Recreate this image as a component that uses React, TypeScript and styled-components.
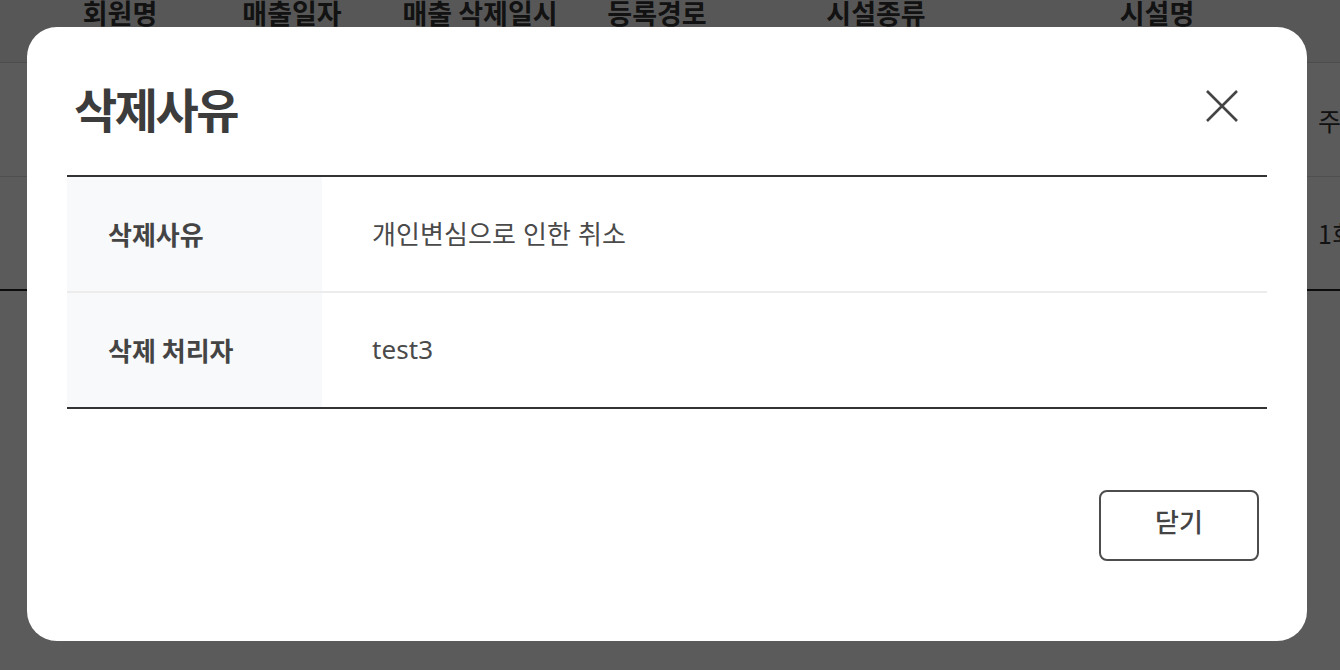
import React from "react";
import styled, { createGlobalStyle } from "styled-components";

const Global = createGlobalStyle`
  html, body { margin: 0; padding: 0; background: #ffffff; overflow: hidden; }
  body { font-family: "Noto Sans CJK KR", "Noto Sans", sans-serif; width: 1340px; height: 670px; }
  * { box-sizing: border-box; }
`;

const Page = styled.div`
  width: 1340px;
  height: 670px;
  overflow: hidden;
  background: #ffffff;
`;

const BgTable = styled.div`
  margin-top: -40px;
  display: grid;
  grid-template-columns: 40px 160px 184px 192px 162px 276px 286px 140px;
`;

const HeadCell = styled.div`
  height: 103px;
  display: flex;
  align-items: center;
  justify-content: center;
  background: #f4f4f4;
  border-bottom: 1px solid #d8d8d8;
  font-size: 27px;
  font-weight: 700;
  color: #333;
  white-space: nowrap;
  padding-top: 2px;
`;

const BodyCell = styled.div<{ $last?: boolean; $left?: boolean }>`
  height: 114px;
  display: flex;
  align-items: center;
  justify-content: ${(p) => (p.$left ? "flex-start" : "center")};
  padding-left: ${(p) => (p.$left ? "18px" : "0")};
  border-bottom: ${(p) => (p.$last ? "2px solid #222" : "1px solid #dcdcdc")};
  font-size: 25px;
  color: #333;
  white-space: nowrap;
`;

const Overlay = styled.div`
  position: fixed;
  inset: 0;
  background: rgba(0, 0, 0, 0.645);
  display: flex;
  align-items: flex-start;
  justify-content: flex-start;
  padding: 27px 0 0 27px;
`;

const Modal = styled.div`
  width: 1280px;
  height: 614px;
  background: #ffffff;
  border-radius: 30px;
  padding: 40px 40px 0 40px;
  display: flex;
  flex-direction: column;
`;

const Header = styled.div`
  height: 80px;
  display: flex;
  align-items: center;
  justify-content: space-between;
  margin-bottom: 28px;
`;

const Title = styled.h2`
  margin: 0;
  font-size: 47px;
  font-weight: 700;
  letter-spacing: -2.5px;
  color: #3c3c3c;
  padding-left: 7px;
  line-height: 1;
`;

const CloseButton = styled.button`
  width: 40px;
  height: 40px;
  border: none;
  background: transparent;
  padding: 0;
  margin-right: 25px;
  margin-top: -2px;
  display: flex;
  align-items: center;
  justify-content: center;
  cursor: pointer;
`;

const InfoTable = styled.div`
  border-top: 2px solid #333;
  border-bottom: 2px solid #333;
  display: grid;
  grid-template-columns: 255px 1fr;
`;

const Label = styled.div<{ $divider?: boolean }>`
  height: ${(p) => (p.$divider ? "116px" : "114px")};
  background: #f7f9fa;
  display: flex;
  align-items: center;
  padding-left: 41px;
  padding-bottom: 2px;
  font-size: 26px;
  font-weight: 700;
  color: #444;
  border-bottom: ${(p) => (p.$divider ? "2px solid #ececec" : "none")};
`;

const Value = styled.div<{ $divider?: boolean }>`
  height: ${(p) => (p.$divider ? "116px" : "114px")};
  display: flex;
  align-items: center;
  padding-left: 50px;
  padding-bottom: 2px;
  font-family: "Noto Sans", "Noto Sans CJK KR", sans-serif;
  font-size: 26px;
  letter-spacing: 0.1px;
  color: #4a4a4a;
  border-bottom: ${(p) => (p.$divider ? "2px solid #ececec" : "none")};
`;

const Footer = styled.div`
  display: flex;
  justify-content: flex-end;
  padding-right: 8px;
  margin-top: 81px;
`;

const OutlineButton = styled.button`
  width: 160px;
  height: 71px;
  border: 2px solid #4d4d4d;
  border-radius: 8px;
  background: #ffffff;
  font-family: "Noto Sans CJK KR", "Noto Sans", sans-serif;
  font-size: 26px;
  font-weight: 500;
  color: #444;
  cursor: pointer;
  padding: 0 0 10px 0;
  line-height: 1;
`;

const headers = ["", "회원명", "매출일자", "매출 삭제일시", "등록경로", "시설종류", "시설명", ""];

export default function App() {
  return (
    <Page>
      <Global />
      <BgTable>
        {headers.map((h, i) => (
          <HeadCell key={"h" + i}>{h}</HeadCell>
        ))}
        {[0, 1, 2, 3, 4, 5, 6].map((i) => (
          <BodyCell key={"a" + i} />
        ))}
        <BodyCell $left>주간</BodyCell>
        {[0, 1, 2, 3, 4, 5, 6].map((i) => (
          <BodyCell key={"b" + i} $last />
        ))}
        <BodyCell $left $last>1회</BodyCell>
      </BgTable>
      <Overlay>
        <Modal>
          <Header>
            <Title>삭제사유</Title>
            <CloseButton aria-label="닫기">
              <svg width="34" height="34" viewBox="0 0 34 34">
                <path d="M2 2 L32 32 M32 2 L2 32" stroke="#444" strokeWidth="2.6" fill="none" />
              </svg>
            </CloseButton>
          </Header>
          <InfoTable>
            <Label $divider>삭제사유</Label>
            <Value $divider>개인변심으로 인한 취소</Value>
            <Label>삭제 처리자</Label>
            <Value>test3</Value>
          </InfoTable>
          <Footer>
            <OutlineButton>닫기</OutlineButton>
          </Footer>
        </Modal>
      </Overlay>
    </Page>
  );
}
